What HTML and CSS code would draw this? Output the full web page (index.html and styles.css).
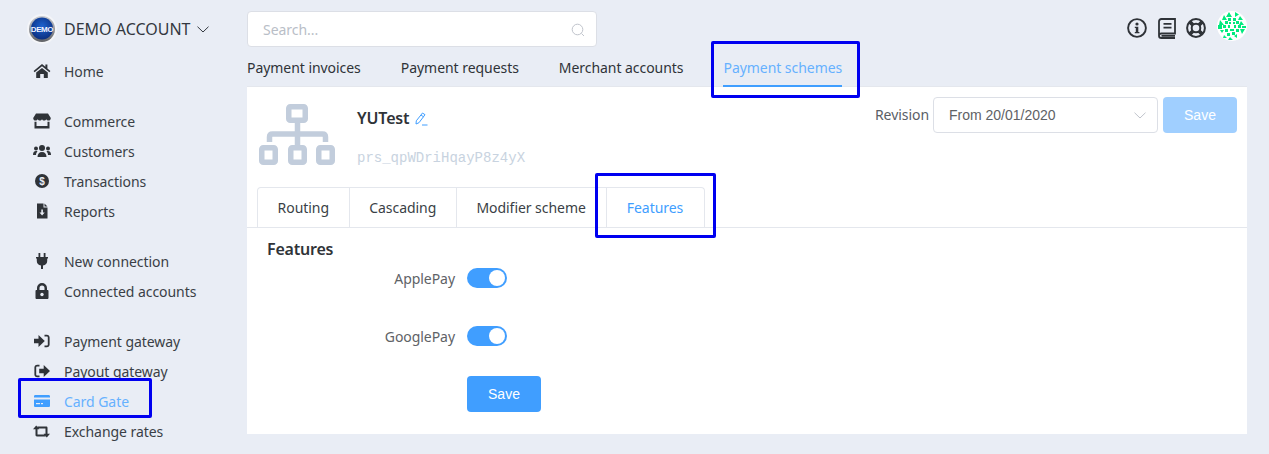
FILE: index.html
```html
<!DOCTYPE html>
<html lang="en">
<head>
<meta charset="utf-8">
<title>Payment schemes</title>
<link rel="stylesheet" href="styles.css">
</head>
<body>
<div class="app">
  <aside class="sidebar">
    <div class="account">
      <svg class="avatar" viewBox="0 0 30 30"><defs><radialGradient id="dg" cx="50%" cy="40%" r="60%"><stop offset="0" stop-color="#1c63d0"/><stop offset="1" stop-color="#0c2f80"/></radialGradient><linearGradient id="rg" x1="0" y1="0" x2="0" y2="1"><stop offset="0" stop-color="#c9ccd2"/><stop offset="1" stop-color="#5f6165"/></linearGradient></defs><circle cx="15" cy="15" r="15" fill="#f4f5f8"/><circle cx="15" cy="15" r="13" fill="url(#rg)"/><circle cx="15" cy="14.500" r="11" fill="url(#dg)"/><text x="15" y="17.500" class="avatar-text" text-anchor="middle">DEMO</text></svg>
      <span class="account-name">DEMO ACCOUNT</span>
      <svg class="chev" viewBox="0 0 12 7"><path d="M.5.7 6 6 11.500.7" fill="none" stroke="#33383f" stroke-width="1"/></svg>
    </div>
    <nav class="nav">
      <div class="group">
        <a class="item"><svg class="ico" viewBox="0 0 18 16"><path d="M9 1 .6 8l1 1.200L9 3.200l7.400 6 1-1.200-3-2.500V1.600h-2v2.200z M3.200 9.600 9 4.900l5.800 4.700V15h-4v-4H7.200v4h-4z" fill="#2f3338"/></svg>Home</a>
      </div>
      <div class="group">
        <a class="item"><svg class="ico" viewBox="0 0 18 16"><path d="M3 .5h12L17.800 5c0 1.600-1 2.600-2.300 2.600-1 0-1.800-.5-2.200-1.300-.4.8-1.300 1.300-2.200 1.300S9.400 7.100 9 6.300c-.4.8-1.200 1.300-2.100 1.300s-1.800-.5-2.200-1.300c-.4.8-1.200 1.300-2.200 1.300C1.200 7.600.2 6.600.2 5z M1.500 8.800h2V13h11V8.800h2v6.700h-15z" fill="#2f3338"/></svg>Commerce</a>
        <a class="item"><svg class="ico" viewBox="0 0 18 14"><circle cx="9" cy="4" r="3" fill="#2f3338"/><circle cx="3" cy="4.500" r="2" fill="#2f3338"/><circle cx="15" cy="4.500" r="2" fill="#2f3338"/><path d="M4.500 13c0-3 1.500-5 4.500-5s4.500 2 4.500 5z M0 11c0-2.500 1-4 3-4 .6 0 1.100.1 1.500.4C3.500 8.300 3 9.600 3 11z M18 11c0-2.500-1-4-3-4-.6 0-1.100.1-1.500.4 1 .9 1.500 2.200 1.500 3.600z" fill="#2f3338"/></svg>Customers</a>
        <a class="item"><svg class="ico" viewBox="0 0 16 16"><circle cx="8" cy="8" r="7" fill="#2f3338"/><text x="8" y="11.500" class="dollar" text-anchor="middle">$</text></svg>Transactions</a>
        <a class="item"><svg class="ico" viewBox="0 0 16 16"><path d="M3 .5h6.500v4h4v11H3z M10.500.5l3 3h-3z" fill="#2f3338"/><path d="M7.300 6.500h1.600v3h1.800L8.100 12.500 5.500 9.500h1.800z" fill="#e9edf5"/></svg>Reports</a>
      </div>
      <div class="group">
        <a class="item"><svg class="ico" viewBox="0 0 16 16"><path d="M4.500 0h1.800v4H9.700V0h1.800v4H14v1.500h-.8V8c0 2.400-1.600 4-4.200 4.400V16H7v-3.600C4.400 12 2.800 10.400 2.800 8V5.500H2V4h2.500z" fill="#2f3338"/></svg>New connection</a>
        <a class="item"><svg class="ico" viewBox="0 0 16 16"><path d="M3 7V5a5 5 0 0 1 10 0v2h.5c.5 0 1 .4 1 1v7c0 .5-.5 1-1 1h-11c-.5 0-1-.5-1-1V8c0-.6.5-1 1-1zm2.500 0h5V5a2.500 2.500 0 0 0-5 0z" fill="#2f3338"/><circle cx="8" cy="11.500" r="1.700" fill="#e9edf5"/></svg>Connected accounts</a>
      </div>
      <div class="group">
        <a class="item"><svg class="ico ico-gate" viewBox="0 0 16 14"><path d="M0 4.700h4.500V1L10.800 7l-6.300 6V9.300H0z M10.500.8h2.300c1.700 0 2.800 1.200 2.800 2.800v6.800c0 1.600-1.100 2.800-2.800 2.800h-2.300v-1.800h2.300c.6 0 1-.4 1-1V3.600c0-.6-.4-1-1-1h-2.300z" fill="#2f3338"/></svg>Payment gateway</a>
        <a class="item"><svg class="ico ico-gate" viewBox="0 0 16 14"><path d="M16 7l-6.300-6v3.700H5.200v4.600h4.500V13z M5.500.8H3.200C1.500.8.400 2 .4 3.600v6.800c0 1.600 1.100 2.800 2.800 2.800h2.300v-1.800H3.200c-.6 0-1-.4-1-1V3.600c0-.6.4-1 1-1h2.300z" fill="#2f3338"/></svg>Payout gateway</a>
        <a class="item active"><svg class="ico ico-card" viewBox="0 0 16 12"><path d="M1.300 0h13.400C15.400 0 16 .6 16 1.300V2.500H0V1.300C0 .6.600 0 1.300 0z M0 4.500h16v6.200c0 .7-.6 1.300-1.300 1.300H1.300C.6 12 0 11.400 0 10.700z" fill="#409eff"/><rect x="2" y="8" width="4" height="1.200" fill="#e9edf5"/><rect x="7" y="8" width="2" height="1.200" fill="#e9edf5"/></svg>Card Gate</a>
        <a class="item"><svg class="ico ico-swap" viewBox="0 0 17 13"><path d="M0 4.200 3.200 .5l3.200 3.700H4.500v5.400h6.700l1.600 1.900H3.900c-.9 0-1.400-.5-1.400-1.400V4.200z M17 8.800l-3.200 3.700-3.200-3.700h1.900V3.400H5.800L4.200 1.500h8.900c.9 0 1.400.5 1.400 1.400v5.900z" fill="#2f3338"/></svg>Exchange rates</a>
      </div>
    </nav>
  </aside>
  <main class="main">
    <header class="topbar">
      <div class="search">
        <span class="search-ph">Search...</span>
        <svg class="search-ico" viewBox="0 0 14 14"><circle cx="6.500" cy="6.500" r="5.300" fill="none" stroke="#c0c4cc" stroke-width="1"/><path d="M10.500 10.500 13 13" stroke="#c0c4cc" stroke-width="1"/></svg>
      </div>
      <div class="top-icons">
        <svg class="top-ico" viewBox="0 0 20 20"><circle cx="10" cy="10" r="8.900" fill="none" stroke="#2f3338" stroke-width="1.900"/><circle cx="10" cy="6" r="1.600" fill="#2f3338"/><path d="M7.800 8.700h3.500v5.200h1.100v1.400H7.800v-1.400h1V10h-1z" fill="#2f3338"/></svg>
        <svg class="top-book" viewBox="0 0 18 21"><path d="M3.400 1H17v14.500H3.400C2 15.500 1 16.400 1 17.700S2 20 3.400 20H17M1 17.700V3.400C1 2 2 1 3.400 1M3.500 17.800H17" fill="none" stroke="#2f3338" stroke-width="1.800"/><path d="M5.500 5h8v1.800h-8zM5.500 8.700h8v1.800h-8z" fill="#2f3338"/></svg>
        <svg class="top-ico" viewBox="0 0 20 20"><path d="M3.800 3.800 7 7M16.200 3.800 13 7M3.800 16.200 7 13M16.200 16.200 13 13" stroke="#2f3338" stroke-width="3.800"/><circle cx="10" cy="10" r="8.900" fill="none" stroke="#2f3338" stroke-width="2"/><circle cx="10" cy="10" r="4.300" fill="none" stroke="#2f3338" stroke-width="2"/></svg>
        <svg class="identicon" viewBox="0 0 30 30"><defs><clipPath id="ic"><circle cx="15" cy="15" r="15"/></clipPath></defs><circle cx="15" cy="15" r="15" fill="#fff"/><g fill="#00ea7e" clip-path="url(#ic)"><path d="M12 1l3 5H9z M18 1v5l4-2.500z M7 4l3 5H5z M23 5l3 4h-5z M11 7h3v3h-3z M16 7h3v3h-3z M3 9l4 5H2z M8 10h3v3H8z M19 10h3v3h-3z M24 10l3 4h-5z M12 11h2v2h-2z M16 11h2v2h-2z M1 14h4v4H1z M6 14h3v3H6z M11 14h2v3h-2z M17 14h2v3h-2z M21 14h3v3h-3z M25 15h4v2h-4z M3 19h4l-2 3z M8 18h3v3H8z M13 18h4v2h-4z M19 18h3v3h-3z M23 18h5l-3 5z M10 22h3v3h-3z M15 21h3v3h-3z M7 24l3 3H6z M20 23v4l-3-2z M13 26l3 3h-5z"/></g></svg>
      </div>
    </header>
    <div class="tabs">
      <a class="tab">Payment invoices</a>
      <a class="tab">Payment requests</a>
      <a class="tab">Merchant accounts</a>
      <a class="tab tab-on">Payment schemes</a>
    </div>
    <section class="panel">
      <div class="head">
        <svg class="scheme-ico" viewBox="0 0 76 61"><g fill="none" stroke="#c2cddc" stroke-width="5.500" stroke-linejoin="round"><rect x="29.750" y="2.750" width="16.500" height="13.500" rx="1.500"/><rect x="2.750" y="43.750" width="13.500" height="14.500" rx="1.500"/><rect x="31.750" y="43.750" width="13.500" height="14.500" rx="1.500"/><rect x="59.750" y="43.750" width="13.500" height="14.500" rx="1.500"/><path d="M38.500 19V41M10.500 38V33c0-2 1-3 3-3h50c2 0 3 1 3 3v5"/></g></svg>
        <div class="title-block">
          <div class="title-row"><span class="title">YUTest</span><svg class="pen" viewBox="0 0 14 14"><path d="M8.500 1l2.500 1.700-6 8-3 1.300.3-3.200zM7 3l2.500 1.800" fill="none" stroke="#409eff" stroke-width="1"/><path d="M8 13h5.500" stroke="#409eff" stroke-width="1"/></svg></div>
          <div class="code">prs_qpWDriHqayP8z4yX</div>
        </div>
        <div class="revision">
          <span class="rev-label">Revision</span>
          <div class="select"><span>From 20/01/2020</span><svg class="sel-chev" viewBox="0 0 12 7"><path d="M.5.700 6 6 11.500.700" fill="none" stroke="#c0c4cc" stroke-width="1"/></svg></div>
          <button class="btn btn-off">Save</button>
        </div>
      </div>
      <div class="subtabs">
        <a class="sub">Routing</a>
        <a class="sub">Cascading</a>
        <a class="sub sub-wide">Modifier scheme</a>
        <a class="sub sub-on">Features</a>
      </div>
      <div class="form">
        <h2 class="form-title">Features</h2>
        <div class="row"><label class="lbl">ApplePay</label><span class="switch"><span class="knob"></span></span></div>
        <div class="row"><label class="lbl">GooglePay</label><span class="switch"><span class="knob"></span></span></div>
        <div class="row row-btn"><span class="lbl"></span><button class="btn btn-on">Save</button></div>
      </div>
    </section>
  </main>
</div>
<div class="mark mark-tab"></div>
<div class="mark mark-sub"></div>
<div class="mark mark-card"></div>
</body>
</html>
```
FILE: styles.css
```css
* { box-sizing: border-box; }
html, body { margin: 0; height: 100%; }
body {
  background: #e9edf5;
  font-family: "Noto Sans", "Open Sans", sans-serif;
  color: #2f3338;
  font-size: 14px;
  letter-spacing: -0.05px;
  overflow: hidden;
  position: relative;
}
.app { display: flex; height: 454px; padding-right: 22px; }
.sidebar { width: 247px; flex: none; padding: 11px 0 0 28px; }
.account { display: flex; align-items: center; height: 36px; }
.avatar { width: 30px; height: 30px; margin-left: -1px; margin-right: 7px; }
.avatar-text { font: bold 8px "Liberation Sans", sans-serif; fill: #eef3ff; letter-spacing: -0.4px; }
.account-name { font-size: 16px; color: #33383f; letter-spacing: 0; }
.chev { width: 12px; height: 7px; margin-left: 7px; }
.nav { margin-top: 9px; }
.group { margin-bottom: 20px; }
.item { display: flex; align-items: center; height: 30px; font-size: 14px; color: #3a3f46; }
.item.active { color: #66b1ff; }
.ico { width: 18px; height: 16px; margin-left: 5px; margin-right: 13px; flex: none; }
.ico-gate { width: 16px; height: 14px; margin-left: 6px; margin-right: 14px; }
.ico-swap { width: 17px; height: 13px; margin-left: 5px; margin-right: 14px; }
.ico-card { width: 16px; height: 12px; margin-left: 6px; margin-right: 14px; }
.dollar { font: bold 10px "Liberation Sans", sans-serif; fill: #e9edf5; }
.main { flex: 1; min-width: 0; display: flex; flex-direction: column; }
.topbar { display: flex; justify-content: space-between; align-items: flex-start; padding-top: 11px; height: 58px; flex: none; }
.search {
  width: 350px; height: 36px; background: #fff; border: 1px solid #dcdfe6; border-radius: 4px;
  display: flex; align-items: center; justify-content: space-between; padding: 0 11px 0 15px;
}
.search-ph { font-size: 14px; color: #b9bec7; }
.search-ico { width: 14px; height: 14px; margin-top: 2px; }
.top-icons { display: flex; align-items: flex-start; }
.top-ico { width: 20px; height: 20px; margin-top: 7px; }
.top-book { width: 18px; height: 21px; margin: 7px 10px 0 11px; }
.identicon { width: 30px; height: 30px; margin-left: 11px; margin-top: 0; }
.tabs { display: flex; gap: 40px; height: 28px; flex: none; position: relative; z-index: 1; }
.tab { display: block; height: 29px; line-height: 20px; font-size: 14px; color: #2f3338; }
.tab-on { color: #66b1ff; border-bottom: 2px solid #409eff; }
.panel { background: #fff; height: 348px; border-top: 1px solid #e4e7ed; flex: none; }
.head { display: flex; padding: 10px 10px 0 12px; height: 100px; }
.scheme-ico { width: 76px; height: 61px; margin-top: 7px; flex: none; }
.title-block { margin-left: 22px; }
.title-row { display: flex; align-items: center; height: 22px; margin-top: 10px; }
.title { font-size: 16px; font-weight: 600; color: #2f3338; letter-spacing: -0.15px; }
.pen { width: 14px; height: 14px; margin-left: 5px; margin-top: 2px; }
.code { font-family: "Liberation Mono", monospace; font-size: 14px; letter-spacing: 0; color: #c8d3e0; margin-top: 20px; line-height: 18px; }
.revision { display: flex; align-items: flex-start; margin-left: auto; }
.rev-label { font-size: 14px; line-height: 36px; color: #5a5e66; margin-right: 4px; }
.select {
  width: 225px; height: 36px; border: 1px solid #dcdfe6; border-radius: 4px; display: flex; align-items: center;
  justify-content: space-between; padding: 0 11px 0 15px; font: 14px "Liberation Sans", sans-serif; letter-spacing: 0; color: #606266; margin-right: 5px;
}
.sel-chev { width: 12px; height: 7px; }
.btn { font: 14px "Liberation Sans", sans-serif; letter-spacing: 0; color: #fff; border: 0; border-radius: 4px; height: 36px; width: 74px; padding: 0; }
.btn-off { background: #a0cfff; }
.btn-on { background: #409eff; }
.subtabs { display: flex; height: 40px; margin-left: 10px; }
.sub {
  display: flex; align-items: center; justify-content: center; height: 40px; padding: 0 19.6px;
  border: 1px solid #e4e7ed; border-left: 0; border-bottom: 0; color: #3a3f46; font-size: 14px;
}
.sub:first-child { border-left: 1px solid #e4e7ed; border-top-left-radius: 4px; }
.sub:last-child { border-top-right-radius: 4px; padding-right: 21px; }
.sub-wide { padding-right: 20.4px; }
.sub-on { color: #409eff; }
.form { border-top: 1px solid #e4e7ed; padding: 12px 0 0 20px; }
.form-title { margin: 0; font-size: 16px; font-weight: 600; line-height: 18px; color: #2f3338; letter-spacing: -0.2px; }
.row { display: flex; align-items: center; height: 40px; margin-bottom: 18px; margin-left: 1px; }
.row-btn { margin-top: 2px; }
.lbl { width: 187px; text-align: right; color: #606266; font-size: 14px; flex: none; }
.switch { width: 40px; height: 20px; background: #409eff; border-radius: 10px; margin-left: 12px; display: flex; justify-content: flex-end; align-items: center; padding: 2px; }
.knob { width: 16px; height: 16px; background: #fff; border-radius: 50%; }
.row-btn .btn { margin-left: 12px; }
.mark { position: absolute; border: 3px solid #0000f0; border-radius: 2px; pointer-events: none; }
.mark-tab { left: 711px; top: 41px; width: 149px; height: 57px; }
.mark-sub { left: 595px; top: 173px; width: 121px; height: 65px; }
.mark-card { left: 18px; top: 378px; width: 134px; height: 40px; }
```
